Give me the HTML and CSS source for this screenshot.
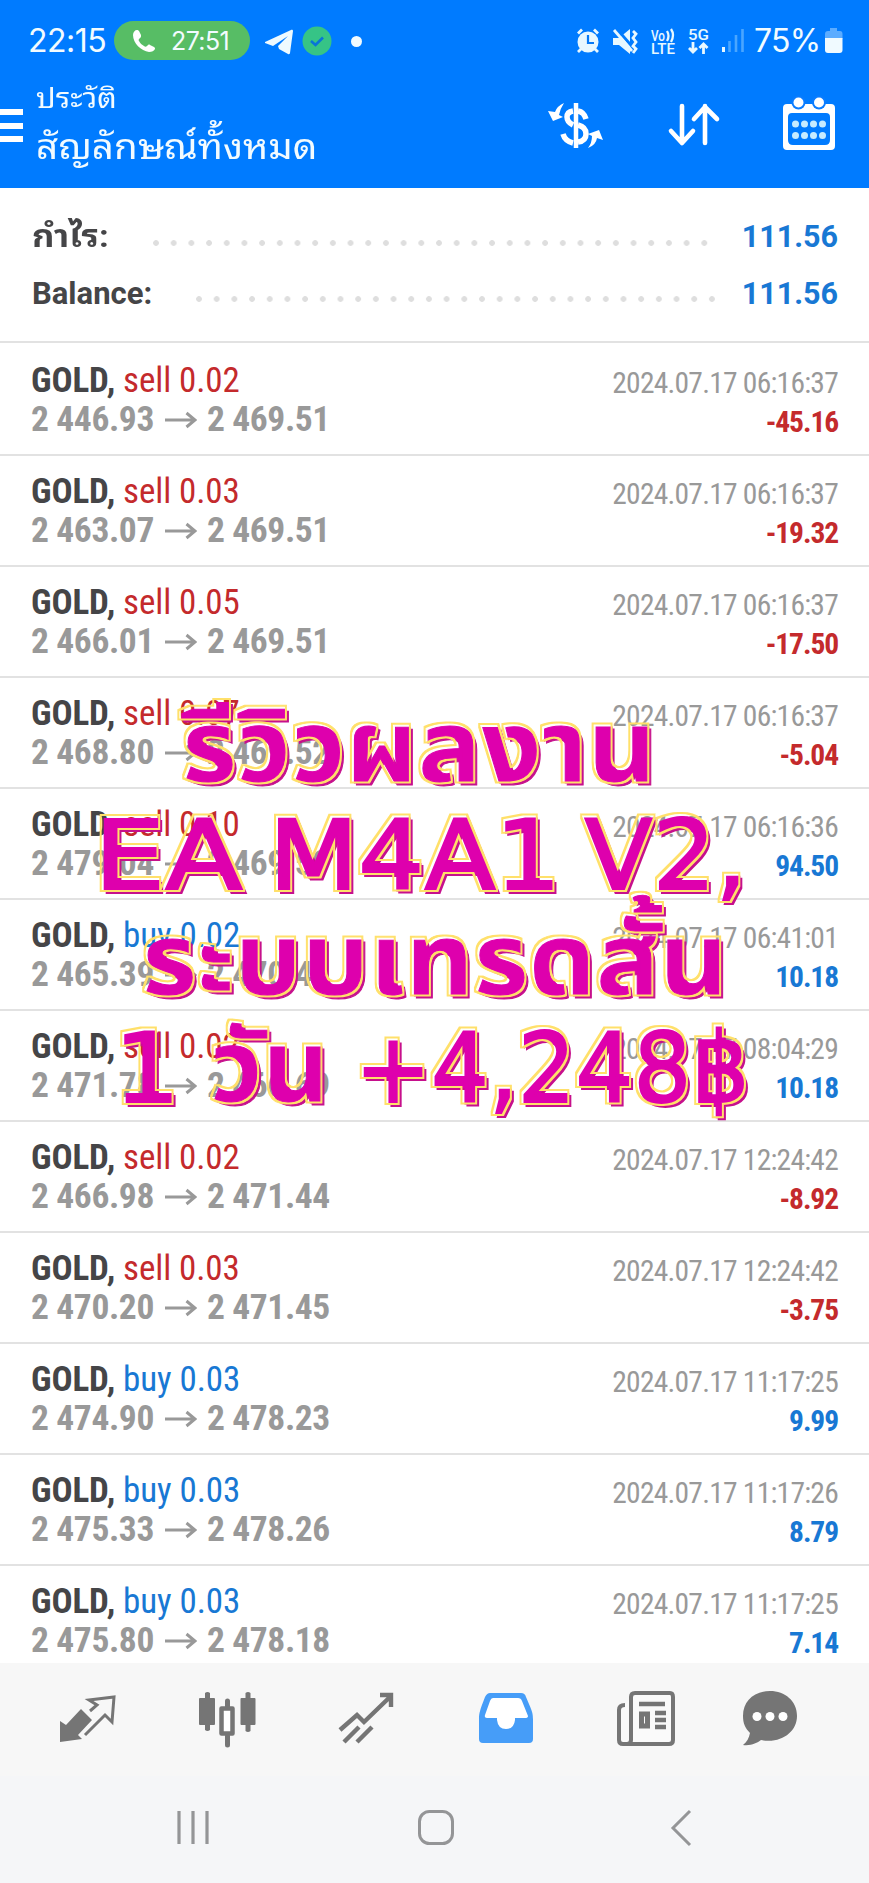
FILE: index.html
```html
<!DOCTYPE html>
<html lang="th">
<head>
<meta charset="utf-8">
<title>ประวัติ</title>
<link rel="stylesheet" href="styles.css">
</head>
<body>
<svg class="defs" width="0" height="0"><defs><symbol id="arrow" viewBox="0 0 32 18"><path d="M0 9H30M21.500 2L30 9L21.500 16" fill="none" stroke="#999" stroke-width="3"/></symbol></defs></svg>
<div class="screen">
<header class="top">
  <div class="status">
    <span class="clock">22:15</span>
    <span class="call"><svg width="24" height="24" viewBox="0 0 24 24"><path d="M5 1C3 1 1 3 1 6c0 8 8 16 16 17 3 0 5-1 6-3 0-1 0-1-1-2l-4-2c-1-1-2 0-3 1-1 1-2 1-3 0-2-1-4-3-5-5-1-1 0-2 1-3s1-1 1-3L7 2C6 1 6 1 5 1z" fill="#fff"/></svg><span class="call-time">27:51</span></span>
    <svg class="tele" width="30" height="26" viewBox="0 0 30 26"><path d="M1 13L27 1c1-.5 2 0 2 1l-3 22c0 1-1 1.500-2 1l-9-5-1-3 10-10L9 17l-8-3z" fill="#eefaff"/></svg>
    <svg class="ok" width="30" height="30" viewBox="0 0 30 30"><circle cx="15" cy="15" r="14.500" fill="#36c486"/><path d="M9 15l4.500 4 7.500-7.500" fill="none" stroke="#0875d8" stroke-width="2.600"/></svg>
    <i class="dot"></i>
    <svg class="sys" width="180" height="34" viewBox="0 0 180 34" fill="none" stroke="#e8f8ff">
      <g stroke-width="3"><circle cx="17" cy="18" r="10.500" fill="#e8f8ff" stroke="none"/><path d="M17 11v8h6" stroke="#087af5" stroke-width="2.200"/><path d="M7 9.500l4-4M27 9.500l-4-4M10 25l-3 3M24 25l3 3" stroke-width="2.800"/></g>
      <path d="M42 14h6l11-9v25l-11-9h-6z" fill="#e8f8ff" stroke="none"/><path d="M45 4l19 22" stroke="#007bff" stroke-width="3"/><path d="M43 6l18 21" stroke-width="2.800"/><path d="M62 7l3 3-3 4 3 4-3 4 3 3-3 4" stroke-width="2.800"/>
      <g class="mini"><text x="80" y="16.500" textLength="14" lengthAdjust="spacingAndGlyphs">Vo</text><path d="M96 7q3 5 0 10M100 5q4 6 0 13" stroke-width="2.300"/><text x="80" y="29.500" textLength="24" lengthAdjust="spacingAndGlyphs">LTE</text><text x="117" y="15.500" textLength="21" lengthAdjust="spacingAndGlyphs">5G</text></g>
      <path d="M122 18v10M118 24l4 4 4-4M132.500 30V20M128.500 24l4-4 4 4" stroke-width="2.800"/>
      <path d="M152.500 23v5" stroke-width="3"/><path d="M158.500 17v11M165 11v17M171.500 5v23" stroke="#4aa6ff" stroke-width="2.600"/>
    </svg>
    <span class="pct">75%</span>
    <svg class="bat" width="18" height="26" viewBox="0 0 18 26"><path d="M5 0h7v3h3q2.500 0 2.500 3v5H0V6q0-3 3-3h2z" fill="#5cacff"/><path d="M0 10h17.500v12q0 3-3 3H3q-3 0-3-3z" fill="#f0faff"/></svg>
  </div>
  <div class="bar">
    <div class="burger"><i></i><i></i><i></i></div>
    <div class="titles"><div class="t1">ประวัติ</div><div class="t2">สัญลักษณ์ทั้งหมด</div></div>
    <svg class="a1" width="56" height="48" viewBox="0 0 56 48" fill="none" stroke="#fff"><path d="M28 1v45" stroke-width="4.500"/><path d="M25 9q-6 1-6 6 0 5 6 8M15 32q2 7 10 9M30 9q6 1 8 8M30 23q8 2 8 9 0 7-8 8" stroke-width="5.500"/><path d="M16 1Q9 4 7 10L0 9l5 10 10-4-4-2q1-6 5-12zM40 46q8-3 9-10l6 2-4-10-11 4 4 2q0 7-4 12z" fill="#fff" stroke="none"/></svg>
    <svg class="a2" width="52" height="44" viewBox="0 0 52 44" fill="none" stroke="#fff" stroke-width="4.600" stroke-linecap="round" stroke-linejoin="round"><path d="M14 3v37M3 28l11 12 11-12M37 40V3M26 16L37 4l12 12"/></svg>
    <svg class="a3" width="54" height="54" viewBox="0 0 54 54"><path fill-rule="evenodd" fill="#fff" d="M5 7H49q4 0 4 4V49q0 4-4 4H5q-4 0-4-4V11q0-4 4-4zM10 16q-4 0-4 4V43q0 5 5 5H43q5 0 5-5V20q0-4-4-4z"/><circle cx="16.500" cy="5.500" r="7" fill="#0a7cff"/><circle cx="37" cy="5.500" r="7" fill="#0a7cff"/><circle cx="16.500" cy="5.500" r="5" fill="#fff"/><circle cx="37" cy="5.500" r="5" fill="#fff"/><g fill="#c6ebff"><circle cx="13.500" cy="27" r="3.500"/><circle cx="22.500" cy="27" r="3.500"/><circle cx="31.500" cy="27" r="3.500"/><circle cx="40.500" cy="27" r="3.500"/><circle cx="13.500" cy="38.500" r="3.500"/><circle cx="22.500" cy="38.500" r="3.500"/><circle cx="31.500" cy="38.500" r="3.500"/><circle cx="40.500" cy="38.500" r="3.500"/></g></svg>
  </div>
</header>
<section class="summary">
  <div class="sum"><b class="thai"><span>กำไร:</span></b><i class="leader l1"></i><b class="val">111.56</b></div>
  <div class="sum"><b class="bal">Balance:</b><i class="leader l2"></i><b class="val">111.56</b></div>
</section>
<main class="deals">
  <div class="deal"><div><p class="sym"><b>GOLD,</b> <span class="sell">sell 0.02</span></p><p class="price">2 446.93<svg><use href="#arrow"/></svg>2 469.51</p></div><div class="r"><p class="time">2024.07.17 06:16:37</p><p class="pl sell">-45.16</p></div></div>
  <div class="deal"><div><p class="sym"><b>GOLD,</b> <span class="sell">sell 0.03</span></p><p class="price">2 463.07<svg><use href="#arrow"/></svg>2 469.51</p></div><div class="r"><p class="time">2024.07.17 06:16:37</p><p class="pl sell">-19.32</p></div></div>
  <div class="deal"><div><p class="sym"><b>GOLD,</b> <span class="sell">sell 0.05</span></p><p class="price">2 466.01<svg><use href="#arrow"/></svg>2 469.51</p></div><div class="r"><p class="time">2024.07.17 06:16:37</p><p class="pl sell">-17.50</p></div></div>
  <div class="deal"><div><p class="sym"><b>GOLD,</b> <span class="sell">sell 0.07</span></p><p class="price">2 468.80<svg><use href="#arrow"/></svg>2 469.52</p></div><div class="r"><p class="time">2024.07.17 06:16:37</p><p class="pl sell">-5.04</p></div></div>
  <div class="deal"><div><p class="sym"><b>GOLD,</b> <span class="sell">sell 0.10</span></p><p class="price">2 479.04<svg><use href="#arrow"/></svg>2 469.59</p></div><div class="r"><p class="time">2024.07.17 06:16:36</p><p class="pl buy">94.50</p></div></div>
  <div class="deal"><div><p class="sym"><b>GOLD,</b> <span class="buy">buy 0.02</span></p><p class="price">2 465.39<svg><use href="#arrow"/></svg>2 470.48</p></div><div class="r"><p class="time">2024.07.17 06:41:01</p><p class="pl buy">10.18</p></div></div>
  <div class="deal"><div><p class="sym"><b>GOLD,</b> <span class="sell">sell 0.02</span></p><p class="price">2 471.78<svg><use href="#arrow"/></svg>2 466.69</p></div><div class="r"><p class="time">2024.07.17 08:04:29</p><p class="pl buy">10.18</p></div></div>
  <div class="deal"><div><p class="sym"><b>GOLD,</b> <span class="sell">sell 0.02</span></p><p class="price">2 466.98<svg><use href="#arrow"/></svg>2 471.44</p></div><div class="r"><p class="time">2024.07.17 12:24:42</p><p class="pl sell">-8.92</p></div></div>
  <div class="deal"><div><p class="sym"><b>GOLD,</b> <span class="sell">sell 0.03</span></p><p class="price">2 470.20<svg><use href="#arrow"/></svg>2 471.45</p></div><div class="r"><p class="time">2024.07.17 12:24:42</p><p class="pl sell">-3.75</p></div></div>
  <div class="deal"><div><p class="sym"><b>GOLD,</b> <span class="buy">buy 0.03</span></p><p class="price">2 474.90<svg><use href="#arrow"/></svg>2 478.23</p></div><div class="r"><p class="time">2024.07.17 11:17:25</p><p class="pl buy">9.99</p></div></div>
  <div class="deal"><div><p class="sym"><b>GOLD,</b> <span class="buy">buy 0.03</span></p><p class="price">2 475.33<svg><use href="#arrow"/></svg>2 478.26</p></div><div class="r"><p class="time">2024.07.17 11:17:26</p><p class="pl buy">8.79</p></div></div>
  <div class="deal"><div><p class="sym"><b>GOLD,</b> <span class="buy">buy 0.03</span></p><p class="price">2 475.80<svg><use href="#arrow"/></svg>2 478.18</p></div><div class="r"><p class="time">2024.07.17 11:17:25</p><p class="pl buy">7.14</p></div></div>
</main>
<nav class="tabs">
  <svg viewBox="0 0 58 58"><path d="M1 30l6 4L22 18l11 11-14 15 4 4-22 3z" fill="#757575"/><path d="M31 20l7-6-8-5 25-3-2 25-7-7-20 20" fill="none" stroke="#757575" stroke-width="3"/></svg>
  <svg viewBox="0 0 58 58"><path d="M6 2q2.500-2 5 0v5h4q1 0 1 1v25q0 1-1 1h-4v5q-2.500 2-5 0v-5H1q-1 0-1-1V8q0-1 1-1h5zM46.500 2q2.500-2 5 0v5h4q1 0 1 1v25q0 1-1 1h-4v6q-2.500 2-5 0v-6h-4q-1 0-1-1V8q0-1 1-1h4z" fill="#757575"/><path d="M28.500 10v7M28.500 45v9" stroke="#757575" stroke-width="5" stroke-linecap="round"/><path d="M22.500 17.500h11v25h-11z" fill="#fff" stroke="#757575" stroke-width="4.500" stroke-linejoin="round"/></svg>
  <svg viewBox="0 0 58 58" fill="none" stroke="#757575" stroke-width="4.400"><path d="M2 39l17-15 7 7L53 5M42 4h11v12M6 51l15-15M19 51l15-15"/></svg>
  <svg viewBox="0 0 58 58"><path d="M12 2h31q4 0 5 4c6 14 7 16 7 22v20q0 4-4 4H5q-4 0-4-4V28c0-6 1-9 6-22q2-4 5-4z" fill="#469df8"/><path d="M15 7h25q3 0 4 3l6 15q0 2-3 2H37v2q-1 9-9 9t-9-9v-2H9q-3 0-2-3l5-14q1-3 3-3z" fill="#fff"/></svg>
  <svg viewBox="0 0 58 58" fill="none" stroke="#757575"><path d="M14 6q0-4 4-4h35q3 0 3 4v43q0 4-4 4H6q-4 0-4-4V19q0-5 6-5M14 6v43q0 4-4 4" fill="#fafafa" stroke-width="4"/><path d="M22 13h26M38 22h11M38 29h11M38 36h11" stroke-width="4.500"/><path d="M24.500 23h6v12h-6z" stroke-width="5"/></svg>
  <svg viewBox="0 0 58 58"><path d="M28 0C12 0 1 10 1 25c0 7 2 12 7 17-1 5-3 9-7 12 8 1 14-2 18-5 20 4 36-8 36-24C55 10 43 0 28 0z" fill="#757575"/><circle cx="15" cy="25.500" r="4.500" fill="#fff"/><circle cx="28" cy="25.500" r="4.500" fill="#fff"/><circle cx="41" cy="25.500" r="4.500" fill="#fff"/></svg>
</nav>
<footer class="sysnav">
  <svg width="34" height="36" viewBox="0 0 34 36"><path d="M3 1v33M17 1v33M31 1v33" stroke="#949597" stroke-width="3.200"/></svg>
  <svg width="36" height="36" viewBox="0 0 36 36"><rect x="1.500" y="1.500" width="33" height="32" rx="10" fill="none" stroke="#949597" stroke-width="3"/></svg>
  <svg width="22" height="38" viewBox="0 0 22 38"><path d="M20 2L3 19l17 17" fill="none" stroke="#949597" stroke-width="3"/></svg>
</footer>
<svg class="promo" width="869" height="460" viewBox="0 670 869 460">
  <defs><filter id="gold" filterUnits="userSpaceOnUse" x="60" y="670" width="720" height="460" color-interpolation-filters="sRGB">
    <feMorphology in="SourceAlpha" operator="dilate" radius="2" result="big"/>
    <feComposite in="big" in2="SourceAlpha" operator="out" result="ring"/>
    <feFlood flood-color="#ffe06a"/><feComposite in2="ring" operator="in"/><feOffset dx="-2" dy="-2" result="line"/>
    <feFlood flood-color="#c6108c"/><feComposite in2="SourceAlpha" operator="in"/><feOffset dx="2" dy="2" result="shade"/>
    <feMerge><feMergeNode in="shade"/><feMergeNode in="SourceGraphic"/><feMergeNode in="line"/></feMerge>
  </filter></defs>
  <g filter="url(#gold)" fill="#de00ad" stroke="#de00ad" stroke-width="4" font-size="97">
    <text class="pt" x="183" y="783" textLength="474" lengthAdjust="spacingAndGlyphs">รีวิวผลงาน</text>
    <text x="95" y="890" textLength="148" lengthAdjust="spacingAndGlyphs">EA</text>
    <text x="270" y="890" textLength="292" lengthAdjust="spacingAndGlyphs">M4A1</text>
    <text x="586" y="890" textLength="162" lengthAdjust="spacingAndGlyphs">V2,</text>
    <text class="pt" x="143" y="996" textLength="586" lengthAdjust="spacingAndGlyphs">ระบบเทรดสั้น</text>
    <text x="115" y="1103" textLength="66" lengthAdjust="spacingAndGlyphs">1</text>
    <text class="pt" x="211" y="1103" textLength="119" lengthAdjust="spacingAndGlyphs">วัน</text>
    <text x="356" y="1103" textLength="394" lengthAdjust="spacingAndGlyphs">+4,248฿</text>
  </g>
</svg>
</div>
</body>
</html>
```
FILE: styles.css
```css
*{box-sizing:border-box}
body{margin:0;background:#fff;font-family:"Roboto Condensed",Roboto,"Noto Sans Thai","Noto Sans",sans-serif}
p{margin:0}
svg{display:block;flex:none;overflow:visible}
.defs{position:absolute}
.screen{position:relative;width:869px;height:1883px;overflow:hidden;display:flex;flex-direction:column}
.top{height:188px;flex:none;background:#007bff;color:#f2fbff}
.status{display:flex;align-items:flex-start;height:82px;padding:21px 0 0 28px;font-family:Inter,Roboto,sans-serif}
.clock{width:86px;font-size:32px;line-height:40px;letter-spacing:-.5px}
.call{display:flex;align-items:center;width:136px;height:39px;border-radius:20px;background:#57bd65;padding-left:18px}
.call-time{margin-left:15px;font-size:25px;letter-spacing:-.6px}
.tele{margin:8px 0 0 14px}
.ok{margin:5px 0 0 8px}
.dot{width:11px;height:11px;border-radius:50%;background:#f2fbff;margin:15px 0 0 19px}
.sys{margin:3px 0 0 209px}
.mini text{font:500 15.500px Roboto,sans-serif;fill:#e8f8ff;stroke:none}
.pct{margin-left:3px;width:71px;font-size:32px;line-height:40px;letter-spacing:-.8px}
.bat{margin:7px 0 0}
.bar{display:flex;height:106px}
.burger{width:36px;padding-top:27px}
.burger i{display:block;width:23px;height:6px;margin-bottom:7.500px;background:#fff}
.titles{width:511px;font-family:Roboto,"Noto Sans Thai Looped","Noto Looped Thai","Noto Sans Thai","Noto Sans",sans-serif}
.titles div{transform-origin:0 50%;transform:scaleX(1.11);white-space:nowrap;width:max-content}
.t1{font-size:27.500px;line-height:34px}
.titles .t2{font-size:35.500px;line-height:46px;margin-top:8px;transform:scaleX(1.085)}
.a1{margin:20px 0 0 1px}
.a2{margin:21px 0 0 64px}
.a3{margin:15px 0 0 62px}
.summary{height:153px;flex:none;padding:20px 31px 0 32px}
.sum{display:flex;height:57px;line-height:57px;font-family:Roboto,"Noto Sans Thai Looped","Noto Looped Thai","Noto Sans Thai",sans-serif;font-size:30.500px;color:#454547;align-items:center}
.sum b{font-weight:700}
.thai,.bal{width:121px;white-space:nowrap;font-size:31px}
.thai span{display:inline-block;transform:scaleX(1.12);transform-origin:0 50%}
.bal{width:164px}
.leader{height:6px;width:566px;margin-top:13px;background:radial-gradient(circle at 3px 3px,#dedede 2.500px,transparent 3.200px) 0 0/17.700px 6px}
.l2{width:520px;margin-top:11px}
.sum .val{margin-left:auto;color:#1878d4}
.deals{height:1322px;flex:none;overflow:hidden}
.deal{display:flex;justify-content:space-between;height:111px;border-top:2px solid #e2e2e2;padding:17px 31px 0 31px;font-stretch:75%}
.deal:first-child{height:113px;padding-top:19px}
.sym{font-size:35px;line-height:38px;white-space:pre;letter-spacing:-.1px}
.sym b{color:#454547}
.price{display:flex;align-items:center;font-size:35.500px;line-height:39px;font-weight:700;color:#999;letter-spacing:-.4px}
.price svg{width:32px;height:18px;margin:0 10px 0 11px}
.r{text-align:right}
.time{font-size:29.500px;line-height:42px;color:#999;letter-spacing:-.75px}
.pl{font-size:29.500px;line-height:36px;font-weight:700;letter-spacing:-1.100px}
.sell{color:#c42a2c}
.buy{color:#1878d4}
.tabs{height:113px;flex:none;background:#f7f7f7;display:flex;padding:28px 0 0 59px;gap:81.500px}
.tabs svg{width:58px;height:58px}
.tabs svg:last-child{margin-left:-15px}
.sysnav{height:107px;background:#f5f6f8;display:flex;padding:34px 0 0 176px}
.sysnav svg:nth-child(2){margin-left:208px}
.sysnav svg:nth-child(3){margin-left:216px;margin-top:-1px}
.promo{position:absolute;left:0;top:670px}
.promo text{font-family:"DejaVu Sans",sans-serif}
.promo .pt{font-family:"Noto Sans Thai","Noto Sans",sans-serif;font-size:101px;font-weight:700;stroke-width:1}
```
